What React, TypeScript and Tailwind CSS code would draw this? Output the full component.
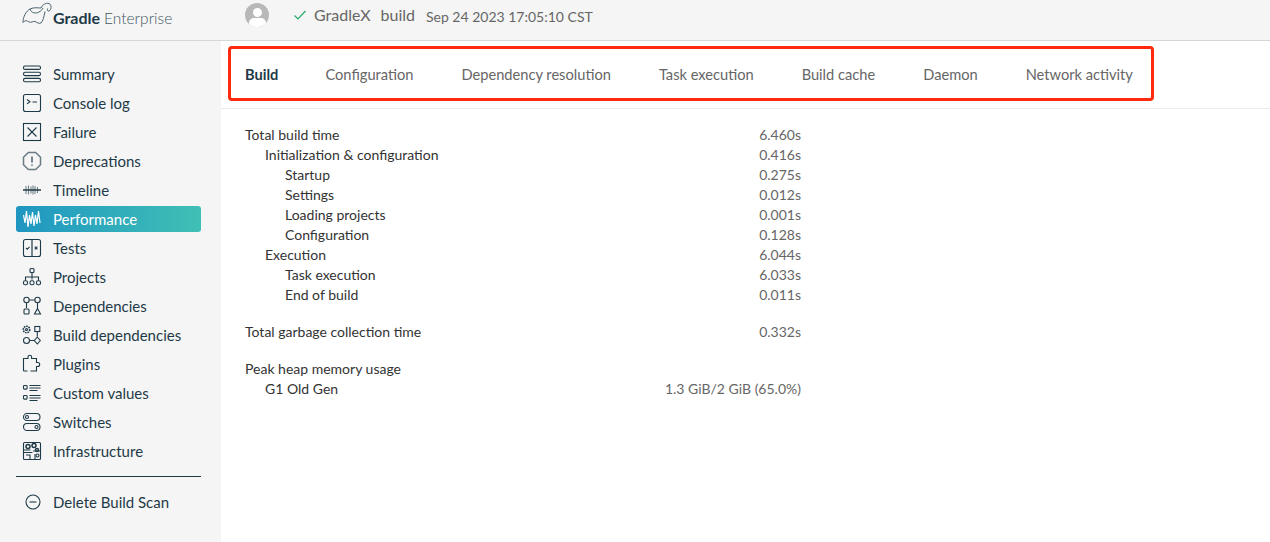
import type { ReactNode } from 'react'

const ink = '#1e3a47'

function Icon({ children }: { children: ReactNode }) {
  return (
    <svg width="20" height="20" viewBox="0 0 20 20" fill="none" stroke="currentColor" strokeWidth="1.1" className="shrink-0">
      {children}
    </svg>
  )
}

const navItems: { label: string; icon: ReactNode }[] = [
  {
    label: 'Summary',
    icon: (
      <>
        <rect x="1.5" y="2" width="17" height="3.4" rx="1.5" />
        <rect x="1.5" y="8.2" width="17" height="3.4" rx="1.5" />
        <rect x="1.5" y="14.4" width="17" height="3.4" rx="1.5" />
      </>
    ),
  },
  {
    label: 'Console log',
    icon: (
      <>
        <rect x="1.5" y="1.5" width="17" height="17" rx="2" />
        <path d="M5 6.5l3 2.2-3 2.2M10.5 9h4.5" />
      </>
    ),
  },
  {
    label: 'Failure',
    icon: (
      <>
        <rect x="1.5" y="1.5" width="17" height="17" />
        <path d="M5.5 5.5l9 9M14.5 5.5l-9 9" />
      </>
    ),
  },
  {
    label: 'Deprecations',
    icon: (
      <>
        <path d="M6.3 1.500h7.400l4.800 4.800v7.400l-4.800 4.800H6.300l-4.800-4.800V6.300z" strokeLinejoin="round" strokeWidth="1.5" opacity="0.65" />
        <path d="M10 5.500v6M10 13.500v1.300" strokeWidth="1.5" opacity="0.8" />
      </>
    ),
  },
  {
    label: 'Timeline',
    icon: (
      <>
        <path d="M4 6v8M6.500 5.500v9M9 6.500v7M11 5.500v9M13 6v8M15.500 7v6" opacity="0.6" />
        <path d="M1 10h18" strokeWidth="1.500" />
      </>
    ),
  },
  {
    label: 'Performance',
    icon: <path d="M1.500 6l1.500 8L4.500 2l1.500 16L7.500 6l1.500 9L10.500 3l1.500 14L13.500 6l1.500 9L16.500 2l1.500 12" strokeWidth="1.200" />,
  },
  {
    label: 'Tests',
    icon: (
      <>
        <rect x="1.5" y="1.5" width="17" height="17" rx="2" />
        <path d="M10 1.5v17" strokeWidth="2" opacity="0.6" />
        <path d="M4 10l1.3 1.3L7.5 8.8M12.8 8.7l2.6 2.6M15.4 8.7l-2.6 2.6" />
      </>
    ),
  },
  {
    label: 'Projects',
    icon: (
      <>
        <rect x="8" y="1.5" width="4" height="4" rx="1" />
        <path d="M10 5.5v7M3.5 13.5V10h13v3.5" />
        <rect x="1.5" y="13.7" width="4" height="4" rx="1.5" />
        <rect x="8" y="13.7" width="4" height="4" rx="1.5" />
        <rect x="14.5" y="13.7" width="4" height="4" rx="1.5" />
      </>
    ),
  },
  {
    label: 'Dependencies',
    icon: (
      <>
        <circle cx="4.5" cy="4" r="2.7" />
        <circle cx="15.5" cy="4" r="2.7" />
        <path d="M7.5 4h5M4.5 7v5M15.5 7v5" />
        <rect x="2" y="13" width="5" height="5" rx="1" />
        <path d="M15.5 12.5l3 5.5h-6z" />
      </>
    ),
  },
  {
    label: 'Build dependencies',
    icon: (
      <>
        <circle cx="4.5" cy="4.5" r="3.2" strokeDasharray="1.6 0.8" strokeWidth="1.6" />
        <circle cx="4.5" cy="4.5" r="1" />
        <rect x="12.8" y="1.5" width="5" height="5" />
        <path d="M15.3 6.5v5M7.5 15.5h4.5" />
        <circle cx="4.5" cy="15.5" r="3" />
        <path d="M15.3 12l3 3.5-3 3.5-3-3.5z" />
      </>
    ),
  },
  {
    label: 'Plugins',
    icon: (
      <path d="M1.500 17V4.500h4.500V3a1.800 1.800 0 0 1 3.600 0v1.500h4.900v4h1.200a1.900 1.900 0 0 1 0 4h-1.200v4.500H8.500M1.500 17h4" />
    ),
  },
  {
    label: 'Custom values',
    icon: (
      <>
        <rect x="1.5" y="2.500" width="3.600" height="3.600" rx="0.8" />
        <rect x="1.5" y="12.500" width="3.600" height="3.600" rx="0.8" />
        <path d="M7.500 2.500h11M7.500 5h11M7.500 7.500h8M7.500 12.500h11M7.500 15h11M7.500 17.500h8" />
      </>
    ),
  },
  {
    label: 'Switches',
    icon: (
      <>
        <rect x="1.5" y="1.5" width="16.5" height="7" rx="3.5" />
        <circle cx="5" cy="5" r="1.5" />
        <rect x="1.5" y="11.5" width="16.5" height="7" rx="3.5" />
        <circle cx="14.5" cy="15" r="1.5" />
      </>
    ),
  },
  {
    label: 'Infrastructure',
    icon: (
      <>
        <rect x="1.5" y="1.5" width="17" height="17" rx="1" />
        <path d="M1.5 9h7M1.5 11.5h9M4 14h4v4.5M11 10h7.5M13 13v5.5" />
        <circle cx="6" cy="5.5" r="2" strokeWidth="1.5" />
        <circle cx="12" cy="4.5" r="2" strokeWidth="1.5" />
        <circle cx="15" cy="9" r="1.5" strokeWidth="1.5" />
        <circle cx="15.5" cy="14.5" r="1.5" />
      </>
    ),
  },
]

const tabs = ['Build', 'Configuration', 'Dependency resolution', 'Task execution', 'Build cache', 'Daemon', 'Network activity']

const groups: { label: string; value: string; depth: 0 | 1 | 2 }[][] = [
  [
    { label: 'Total build time', value: '6.460s', depth: 0 },
    { label: 'Initialization & configuration', value: '0.416s', depth: 1 },
    { label: 'Startup', value: '0.275s', depth: 2 },
    { label: 'Settings', value: '0.012s', depth: 2 },
    { label: 'Loading projects', value: '0.001s', depth: 2 },
    { label: 'Configuration', value: '0.128s', depth: 2 },
    { label: 'Execution', value: '6.044s', depth: 1 },
    { label: 'Task execution', value: '6.033s', depth: 2 },
    { label: 'End of build', value: '0.011s', depth: 2 },
  ],
  [{ label: 'Total garbage collection time', value: '0.332s', depth: 0 }],
  [
    { label: 'Peak heap memory usage', value: '', depth: 0 },
    { label: 'G1 Old Gen', value: '1.3 GiB/2 GiB (65.0%)', depth: 1 },
  ],
]

const depthClass = { 0: 'pl-0', 1: 'pl-5', 2: 'pl-10' }

function Logo() {
  return (
    <svg width="32" height="24" viewBox="0 0 32 24" fill="none" stroke="#3a5460" strokeWidth="0.9" className="-mt-px shrink-0">
      <path d="M2 20.500C2 15 5 9 9 7C13 5 17 6 20 6C21 3 25 0.500 28 1.500C31 3 30.500 8 28 9C26.500 9.500 26 8 26.500 6.500" />
      <path d="M2 20.500C4 18 6 18.500 8 20C10 21 12 19 14 19.500C16 20.500 18 22 20 21C22 19 23 15 24 9.500" />
      <path d="M9 7C10 11 15 12 18 10C20 9 21 8 22 6" />
    </svg>
  )
}

export default function App() {
  return (
    <div className="relative flex h-[542px] w-[1270px] flex-col overflow-hidden bg-white font-['Lato','Liberation_Sans',sans-serif] text-[15px] text-[#333]">
      <header className="flex h-[41px] shrink-0 items-start border-b border-[#d6d6d6] bg-[#f5f5f5]">
        <div className="flex w-[245px] shrink-0 items-start pl-[21px] pt-[3px]">
          <Logo />
          <span className="text-[16px] font-bold leading-[30px] text-[#1e3a47]">Gradle</span>
          <span className="ml-1 text-[15.5px] font-light leading-[30px] text-[#3f5862]">Enterprise</span>
        </div>
        <div className="flex items-center pt-[3px]">
          <div className="relative h-6 w-6 overflow-hidden rounded-full bg-[#b8b8b8]">
            <div className="mx-auto mt-[5px] h-[9px] w-[9px] rounded-full bg-white" />
            <div className="mx-auto mt-[1px] h-[10px] w-[17px] rounded-full bg-white" />
          </div>
          <svg width="14" height="12" viewBox="0 0 14 12" fill="none" stroke="#2aa866" strokeWidth="1.2" className="ml-6">
            <path d="M1.500 6.500l3.500 3.500 7.500-8" />
          </svg>
          <span className="ml-[7px] -mt-px text-[16px] text-[#666]">GradleX</span>
          <span className="ml-[10px] -mt-px text-[16px] text-[#666]">build</span>
          <span className="ml-[11px] mt-[2px] text-[14px] text-[#666]">Sep 24 2023 17:05:10 CST</span>
        </div>
      </header>

      <div className="flex min-h-0 flex-1">
        <aside className="flex w-[221px] shrink-0 flex-col bg-[#f5f5f5] pl-4 pt-[19px]">
          <nav className="flex flex-col">
            {navItems.map(item => {
              const active = item.label === 'Performance'
              return (
                <div key={item.label} className="flex h-[29px] w-[185px] items-start pt-px">
                  <div
                    className={
                      active
                        ? 'flex h-[26px] w-full items-center gap-[11px] rounded-[3px] bg-gradient-to-r from-[#1f96c1] to-[#40bfb5] pl-[6px] text-white'
                        : 'flex h-[26px] w-full items-center gap-[11px] pl-[6px]'
                    }
                    style={active ? undefined : { color: ink }}
                  >
                    <Icon>{item.icon}</Icon>
                    <span>{item.label}</span>
                  </div>
                </div>
              )
            })}
          </nav>
          <div className="mt-[10px] w-[185px] border-t border-[#1e3a47]" />
          <div className="mt-3 flex h-[26px] items-center gap-[12px] pl-[9px] text-[#1e3a47]">
            <svg width="16" height="16" viewBox="0 0 16 16" fill="none" stroke="currentColor" strokeWidth="1.1">
              <circle cx="8" cy="8" r="7" />
              <path d="M4.500 8h7" />
            </svg>
            <span>Delete Build Scan</span>
          </div>
        </aside>

        <main className="min-w-0 flex-1">
          <div className="flex h-[68px] items-center gap-12 border-b border-[#ebebeb] pl-6 text-[14.65px]">
            {tabs.map((tab, i) => (
              <span key={tab} className={i === 0 ? '-mr-px font-bold text-[#1e3a47]' : 'text-[#666]'}>
                {tab}
              </span>
            ))}
          </div>
          <div className="flex w-[580px] flex-col gap-[17px] pl-6 pt-[15px] text-[14px] text-[#333]">
            {groups.map((group, i) => (
              <div key={i} className="flex flex-col">
                {group.map(row => (
                  <div key={row.label} className="flex h-5 items-center justify-between">
                    <span className={depthClass[row.depth]}>{row.label}</span>
                    <span className="text-[#666]">{row.value}</span>
                  </div>
                ))}
              </div>
            ))}
          </div>
        </main>
      </div>

      <div className="absolute left-[228px] top-[46px] h-[55px] w-[926px] rounded-[4px] border-[3px] border-[#ff2a0d]" />
    </div>
  )
}
